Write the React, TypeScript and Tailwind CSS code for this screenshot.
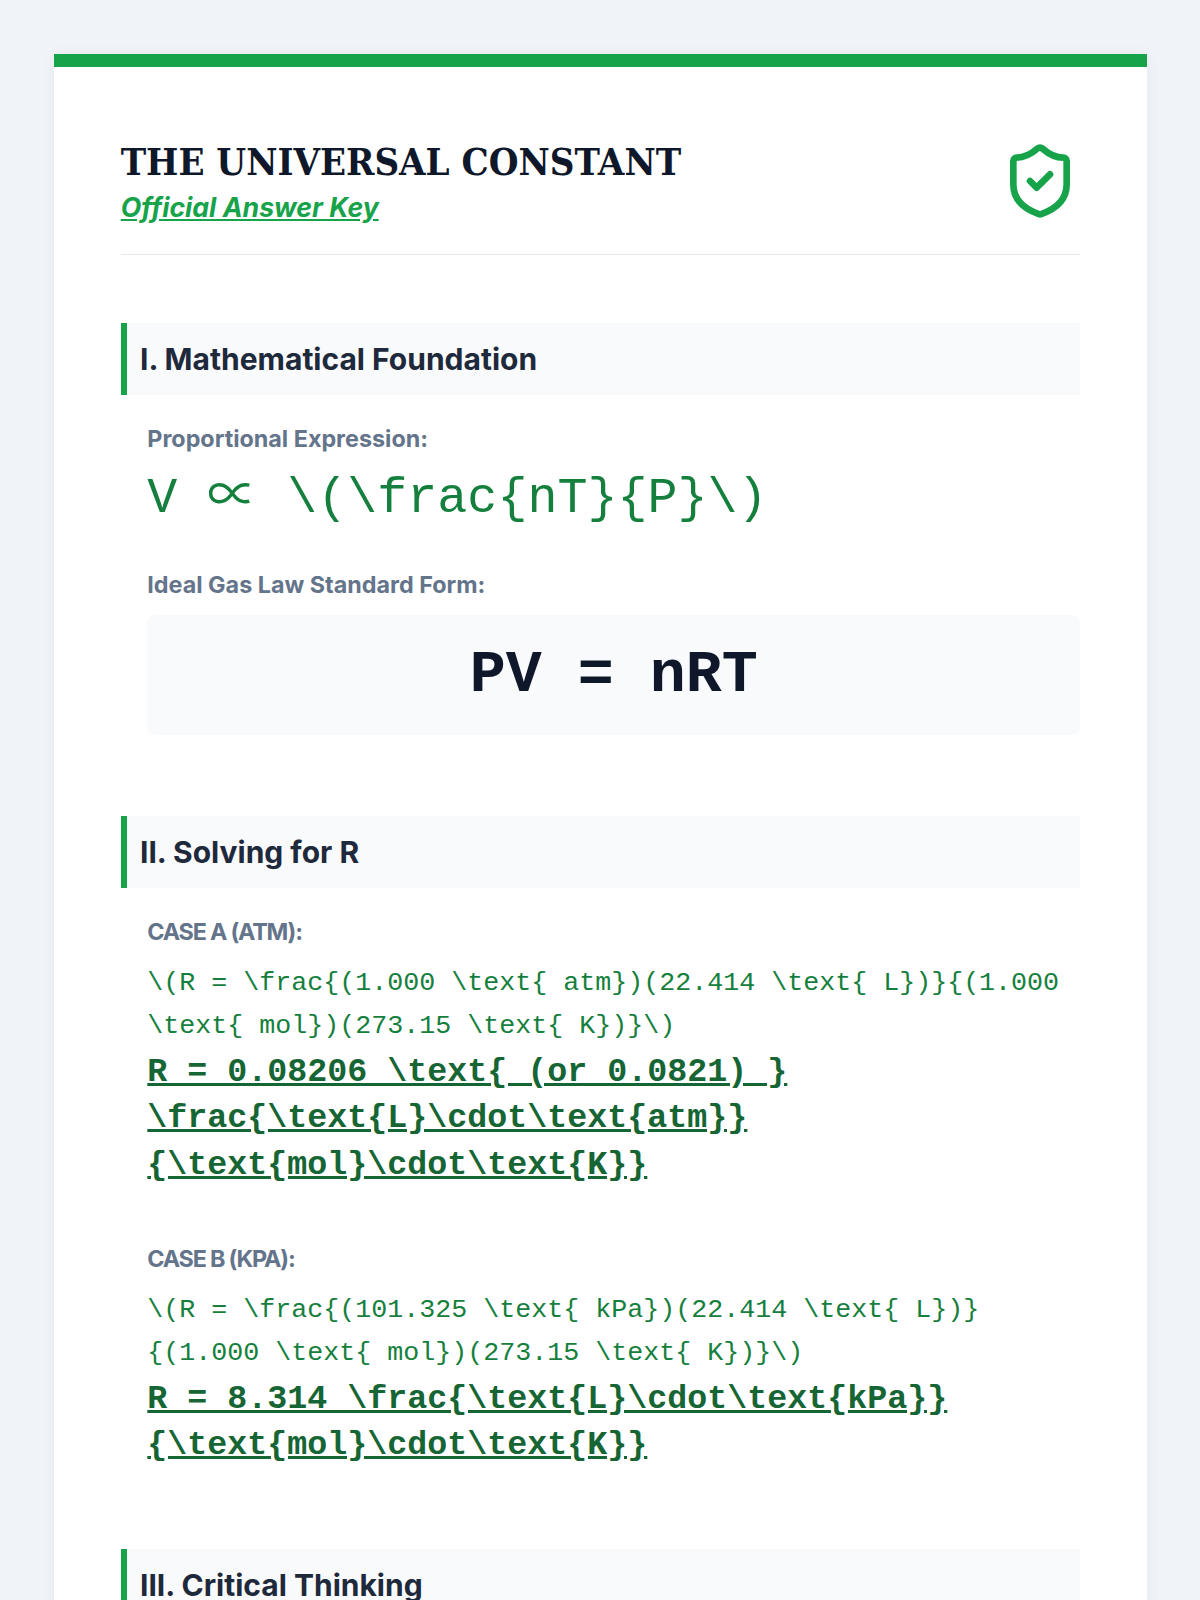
import { ShieldCheck } from "lucide-react";

const inter = "font-['Inter',sans-serif]";
const mono = "font-['Liberation_Mono','Noto_Sans_CJK_SC',monospace]";

function SectionTitle({ children }: { children: string }) {
  return (
    <h2 className={`${inter} bg-[#f8fafc] border-l-[6.67px] border-[#16a34a] pl-[13.33px] pt-[12.83px] pb-[13.5px] text-[30px] leading-[46px] font-bold text-[#1e293b]`}>
      {children}
    </h2>
  );
}

function Label({ children }: { children: string }) {
  return <div className={`${inter} text-[23.33px] leading-[36px] font-bold text-[#64748b]`}>{children}</div>;
}

function CaseLabel({ children }: { children: string }) {
  return <div className={`${inter} text-[23.33px] leading-[36px] font-bold tracking-[-1.2px] text-[#64748b]`}>{children}</div>;
}

function Calc({ work, result }: { work: string; result: string }) {
  return (
    <>
      <div className={`${mono} text-[26.67px] leading-[43px] text-[#15803d] mt-[12px]`}>{work}</div>
      <div className={`${mono} text-[33.33px] leading-[46.67px] font-bold underline text-[#166534] mt-[1px]`}>{result}</div>
    </>
  );
}

export default function App() {
  return (
    <div className="h-[1600px] overflow-hidden bg-[#f0f4f8] pl-[54px] pr-[53px] pt-[54px]">
      <div className="bg-white border-t-[13px] border-[#16a34a] px-[66.67px] pt-[69px] pb-[66.67px] shadow-[0_0_13px_rgba(0,0,0,0.05)]">
        <header className="flex justify-between items-center border-b-[1.33px] border-[#e5e7eb] pb-[28.67px] mb-[68.17px]">
          <div>
            <h1 className="font-['DejaVu_Serif_Condensed','DejaVu_Serif',serif] text-[38px] leading-[52px] font-bold text-[#0f172a]">THE UNIVERSAL CONSTANT</h1>
            <div className={`${inter} text-[26.67px] leading-[36px] mt-[1px] font-bold italic underline text-[#16a34a]`}>Official Answer Key</div>
          </div>
          <ShieldCheck className="w-[80px] h-[80px] text-[#16a34a]" />
        </header>

        <section className="mb-[81px]">
          <SectionTitle>I. Mathematical Foundation</SectionTitle>
          <div className="pl-[26.67px] pt-[25.67px]">
            <Label>Proportional Expression:</Label>
            <div className={`${mono} text-[50px] leading-[72px] text-[#15803d] mt-[6px] mb-[32px]`}>V ∝ \(\frac{"{nT}{P}"}\)</div>
            <Label>Ideal Gas Law Standard Form:</Label>
            <div className={`${mono} bg-[#f8fafc] rounded-[8px] mt-[12px] h-[120px] flex items-center justify-center text-[60px] font-bold text-[#0f172a]`}>PV = nRT</div>
          </div>
        </section>

        <section className="mb-[80px]">
          <SectionTitle>II. Solving for R</SectionTitle>
          <div className="pl-[26.67px] pt-[25.67px]">
            <CaseLabel>CASE A (ATM):</CaseLabel>
            <Calc
              work={"\\(R = \\frac{(1.000 \\text{ atm})(22.414 \\text{ L})}{(1.000 \\text{ mol})(273.15 \\text{ K})}\\)"}
              result={"R = 0.08206 \\text{ (or 0.0821) } \\frac{\\text{L}\\cdot\\text{atm}}{\\text{mol}\\cdot\\text{K}}"}
            />
            <div className="h-[52px]" />
            <CaseLabel>CASE B (KPA):</CaseLabel>
            <Calc
              work={"\\(R = \\frac{(101.325 \\text{ kPa})(22.414 \\text{ L})}{(1.000 \\text{ mol})(273.15 \\text{ K})}\\)"}
              result={"R = 8.314 \\frac{\\text{L}\\cdot\\text{kPa}}{\\text{mol}\\cdot\\text{K}}"}
            />
          </div>
        </section>

        <section>
          <SectionTitle>III. Critical Thinking</SectionTitle>
        </section>
      </div>
    </div>
  );
}
